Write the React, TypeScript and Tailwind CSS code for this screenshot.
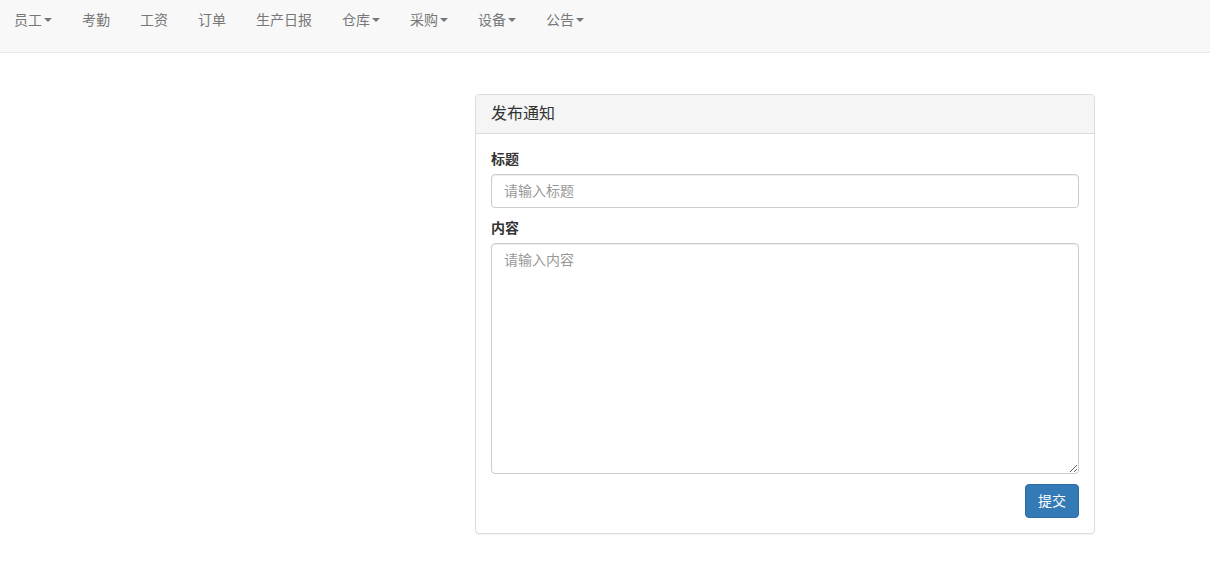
import React from 'react';

const navItems = [
  { label: '员工', caret: true },
  { label: '考勤', caret: false },
  { label: '工资', caret: false },
  { label: '订单', caret: false },
  { label: '生产日报', caret: false },
  { label: '仓库', caret: true },
  { label: '采购', caret: true },
  { label: '设备', caret: true },
  { label: '公告', caret: true },
];

const font = "font-['Helvetica_Neue','Liberation_Sans','Noto_Sans_CJK_SC',sans-serif]";

const App = () => {
  return (
    <div className={`min-h-[580px] bg-white text-[14px] leading-5 text-[#333] ${font}`}>
      {/* Navbar */}
      <nav className="h-[53px] bg-[#f8f8f8] border-b border-[#e7e7e7]">
        <ul className="flex">
          {navItems.map((item) => (
            <li key={item.label}>
              <a href="#" className="flex items-center pl-[14px] pr-[16px] pt-[10px] pb-[20px] text-[#777]">
                {item.label}
                {item.caret && (
                  <span className="ml-[2px] inline-block w-0 h-0 border-t-[4px] border-t-[#777] border-x-[4px] border-x-transparent" />
                )}
              </a>
            </li>
          ))}
        </ul>
      </nav>

      {/* Panel */}
      <div className="pt-[41px] pl-[475px]">
        <div className="w-[620px] bg-white border border-[#ddd] rounded-[4px] shadow-[0_1px_1px_rgba(0,0,0,0.05)]">
          <div className="h-[39px] px-[15px] flex items-center bg-[#f5f5f5] border-b border-[#ddd] rounded-t-[3px]">
            <h3 className="text-[16px] text-[#333]">发布通知</h3>
          </div>
          <div className="p-[15px]">
            <label className="block mb-[5px] font-bold">标题</label>
            <input
              type="text"
              placeholder="请输入标题"
              className="block w-full h-[34px] px-[12px] py-[6px] border border-[#ccc] rounded-[4px] shadow-[inset_0_1px_1px_rgba(0,0,0,0.075)] text-[#555] placeholder:text-[#999] outline-none"
            />
            <label className="block mt-[10px] mb-[5px] font-bold">内容</label>
            <textarea
              placeholder="请输入内容"
              className="block w-full h-[231px] px-[12px] py-[6px] border border-[#ccc] rounded-[4px] shadow-[inset_0_1px_1px_rgba(0,0,0,0.075)] text-[#555] placeholder:text-[#999] outline-none"
            />
            <div className="flex justify-end mt-[10px]">
              <button className="h-[34px] px-[12px] bg-[#337ab7] border border-[#2e6da4] rounded-[4px] text-white">
                提交
              </button>
            </div>
          </div>
        </div>
      </div>
    </div>
  );
};

export default App;
